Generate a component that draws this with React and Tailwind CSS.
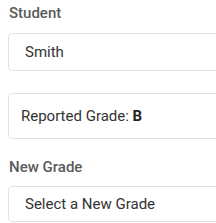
export default function App() {
  return (
    <div
      className="w-[216px] h-[223px] overflow-hidden bg-white"
      style={{ fontFamily: 'Roboto, "Liberation Sans", sans-serif' }}
    >
      <div className="w-[260px] pl-2">
        {/* Student */}
        <div className="mt-[3px] pl-px text-[15px] leading-5 font-medium text-[#5a5a5a]">Student</div>
        <div className="mt-[10px] rounded border border-[#dee2e6] pl-4 pt-2 pb-2 text-[15px] leading-5 text-[#333]">
          Smith
        </div>

        {/* Reported grade */}
        <div className="mt-[22px] rounded border border-[#dee2e6] pl-3 pt-3 pb-3 text-[15px] leading-5 text-[#333]">
          Reported Grade: <span className="font-bold text-[#222]">B</span>
        </div>

        {/* New grade */}
        <div className="mt-[18px] pl-px text-[15px] leading-5 font-medium text-[#5a5a5a]">New Grade</div>
        <div className="mt-[9px] rounded border border-[#dee2e6] pl-4 pt-[7px] pb-[7px] text-[15px] leading-5 text-[#333]">
          Select a New Grade
        </div>
      </div>
    </div>
  )
}
